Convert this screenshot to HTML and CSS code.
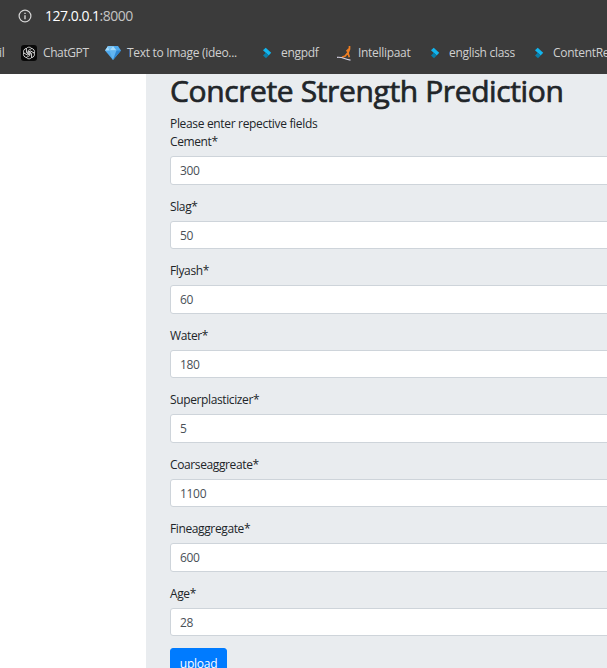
FILE: index.html
```html
<!DOCTYPE html>
<html lang="en">
<head>
<meta charset="utf-8">
<title>Concrete Strength Prediction</title>
<link rel="stylesheet" href="styles.css">
</head>
<body>
<svg class="defs" width="0" height="0">
  <symbol id="tag" viewBox="0 0 10 12">
    <path d="M1 3.2 3.7.7 9.2 5.8 6.7 8.4z" fill="#12b5ee"/>
    <path d="M6.7 8.4 3.8 5.8 1 8.4 4 11.2z" fill="#087da8"/>
  </symbol>
</svg>
<header class="browser">
  <div class="address">
    <svg class="info" viewBox="0 0 14 14" fill="none" stroke="#d5d5d5"><circle cx="7" cy="7" r="5.9" stroke-width="1.2"/><path d="M7 6.2v4M7 3.7v1.4" stroke-width="1.4"/></svg>
    <span class="host">127.0.0.1</span><span class="port">:8000</span>
  </div>
  <nav class="bookmarks">
    <span class="mark mail">il</span>
    <span class="mark gpt">
      <svg width="16" height="16" viewBox="0 0 16 16"><rect width="16" height="16" rx="3" fill="#090909"/>
        <g fill="none" stroke="#d8d8d8" stroke-width=".8" transform="translate(8 8) scale(1.08)">
          <path id="k" d="M-2.6-3.8A3 3 0 0 1 2.5-4.2L-.9-2.2V1.4"/>
          <use href="#k" transform="rotate(60)"/><use href="#k" transform="rotate(120)"/><use href="#k" transform="rotate(180)"/><use href="#k" transform="rotate(240)"/><use href="#k" transform="rotate(300)"/>
        </g></svg>
      ChatGPT</span>
    <span class="mark gem">
      <svg width="16" height="14" viewBox="0 0 16 14"><path d="M3 0h10l3 4.5L8 14 0 4.5z" fill="#4ea9ed"/><path d="M3 0 4.5 4.5H0zM8 0 4.5 4.5h7z" fill="#a4dafa"/><path d="M3 0h5L4.5 4.5z" fill="#79c3f5"/><path d="M4.5 4.5h7L8 14z" fill="#62b5f2"/><path d="M11.5 4.5H16L8 14z" fill="#2f86d2"/></svg>
      Text to Image (ideo...</span>
    <span class="mark eng"><svg width="10" height="12"><use href="#tag"/></svg>engpdf</span>
    <span class="mark paat">
      <svg width="15" height="16" viewBox="0 0 15 16"><path d="M12.5 1v3L11 8l1.3 4.2M12 4 9.5 6.3M11 7.5 8.2 11 5 12.3" fill="none" stroke="#ee7d22" stroke-width="1.7"/><path d="M0 12.3c3-.2 5 .2 7.5 1.2 2 .8 3.8 1.4 6 1.7" fill="none" stroke="#d8d4e6" stroke-width="1.2"/></svg>
      Intellipaat</span>
    <span class="mark class"><svg width="10" height="12"><use href="#tag"/></svg>english class</span>
    <span class="mark content"><svg width="10" height="12"><use href="#tag"/></svg>ContentRe</span>
  </nav>
</header>
<main class="panel">
  <h1>Concrete Strength Prediction</h1>
  <p>Please enter repective fields</p>
  <form>
    <div class="field"><label for="f1">Cement*</label><input id="f1" value="300"></div>
    <div class="field"><label for="f2">Slag*</label><input id="f2" value="50"></div>
    <div class="field"><label for="f3">Flyash*</label><input id="f3" value="60"></div>
    <div class="field"><label for="f4">Water*</label><input id="f4" value="180"></div>
    <div class="field"><label for="f5">Superplasticizer*</label><input id="f5" value="5"></div>
    <div class="field"><label for="f6">Coarseaggreate*</label><input id="f6" value="1100"></div>
    <div class="field"><label for="f7">Fineaggregate*</label><input id="f7" value="600"></div>
    <div class="field"><label for="f8">Age*</label><input id="f8" value="28"></div>
    <button type="button">upload</button>
  </form>
</main>
</body>
</html>
```
FILE: styles.css
```css
* { box-sizing: border-box; }
html, body { height: 668px; overflow: hidden; }
body {
  margin: 0;
  background: #fff;
  color: #212529;
  font: 12px/18px "Open Sans", "Noto Sans", sans-serif;
}
.defs { display: block; position: absolute; }
.browser {
  height: 74px;
  background: #3b3b3b;
  overflow: hidden;
}
.address {
  display: flex;
  align-items: center;
  height: 32px;
  padding-left: 18px;
  font-size: 14px;
  letter-spacing: -.5px;
}
.info { width: 14px; height: 14px; margin-right: 13px; }
.host { color: #fff; }
.port { color: #c4c4c4; }
.bookmarks {
  display: grid;
  grid-template-columns: 21px 84px 157px 75px 93px 104px 120px;
  align-items: center;
  height: 42px;
  color: #d0d0d0;
  white-space: nowrap;
  letter-spacing: -.3px;
}
.mark { display: flex; align-items: center; gap: 6px; }
.eng, .class, .content { gap: 9px; }
.mail { margin-left: -1px; }
.gpt { letter-spacing: -.4px; }
.panel {
  height: 594px;
  margin-left: 146px;
  padding-left: 24px;
  background: #e9ecef;
  overflow: hidden;
}
h1 {
  margin: -1.5px 0 6px;
  font-size: 30px;
  font-weight: 400;
  line-height: 36px;
  white-space: nowrap;
  letter-spacing: -.38px;
  -webkit-text-stroke: .7px #212529;
}
p { margin: 0 0 -.25px; letter-spacing: -.33px; }
.field { margin-bottom: 12px; letter-spacing: -.38px; }
label { display: block; padding-top: .75px; margin-bottom: 5.25px; }
input {
  display: block;
  width: 480px;
  height: 28.5px;
  padding: 4.5px 9px;
  border: 1px solid #ced4da;
  border-radius: 3px;
  background: #fff;
  color: #495057;
  font: inherit;
  letter-spacing: -.3px;
}
button {
  display: block;
  width: 57px;
  height: 28.5px;
  padding: 6px 0 3px;
  border: 1px solid #007bff;
  border-radius: 3px;
  background: #007bff;
  color: #fff;
  font: inherit;
  font-weight: 500;
  letter-spacing: -.25px;
}
```
